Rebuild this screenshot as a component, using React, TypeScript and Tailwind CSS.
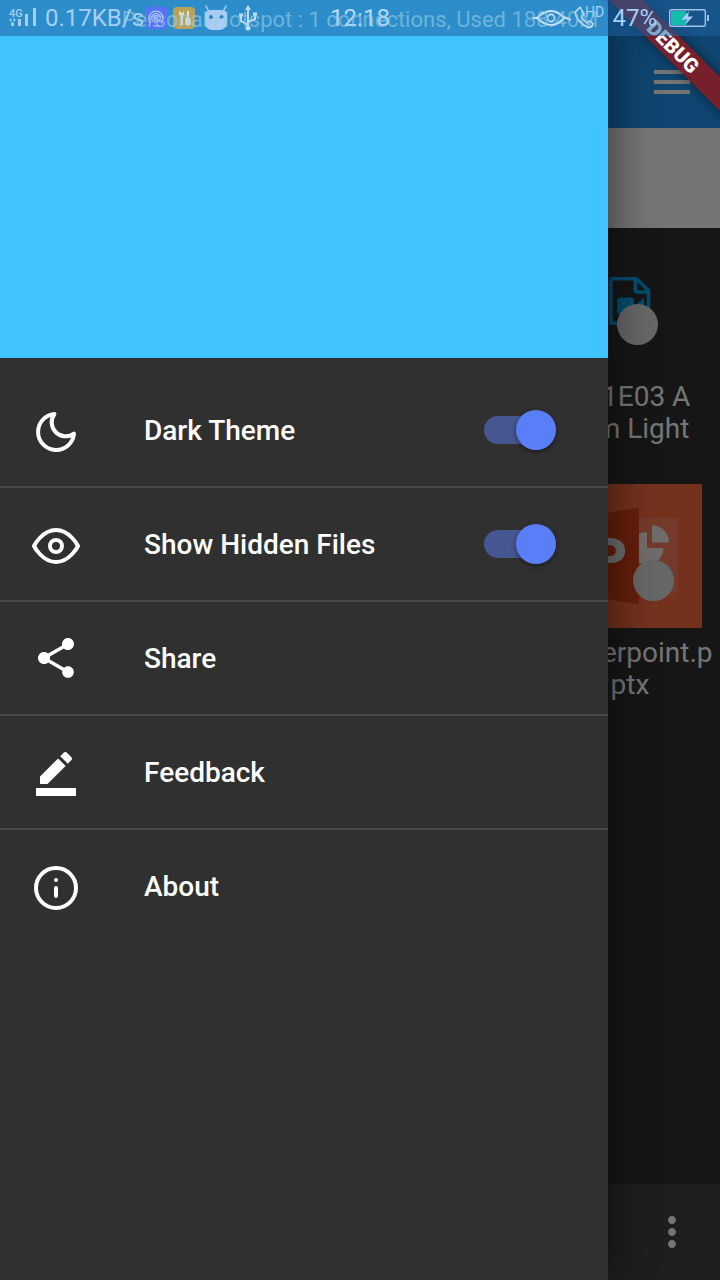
import { useState } from "react";
import type { ReactNode } from "react";

function LineIcon({ children }: { children: ReactNode }) {
  return (
    <svg
      className="mt-1 size-12"
      viewBox="0 0 24 24"
      fill="none"
      stroke="currentColor"
      strokeWidth="2"
      strokeLinecap="round"
      strokeLinejoin="round"
      aria-hidden="true"
    >
      {children}
    </svg>
  );
}

function SolidIcon({ d }: { d: string }) {
  return (
    <svg className="size-12" viewBox="0 0 24 24" fill="currentColor" aria-hidden="true">
      <path d={d} />
    </svg>
  );
}

const MoonIcon = () => (
  <LineIcon>
    <path d="M21 12.79A9 9 0 1 1 11.21 3 7 7 0 0 0 21 12.79z" />
  </LineIcon>
);

const EyeIcon = () => (
  <LineIcon>
    <path d="M1 12s4-8 11-8 11 8 11 8-4 8-11 8-11-8-11-8z" />
    <circle cx="12" cy="12" r="3" />
  </LineIcon>
);

const InfoIcon = () => (
  <LineIcon>
    <circle cx="12" cy="12" r="10" />
    <path d="M12 16v-4M12 8h.01" />
  </LineIcon>
);

const ShareIcon = () => (
  <SolidIcon d="M18 16.08c-.76 0-1.44.3-1.96.77L8.91 12.7c.05-.23.09-.46.09-.7s-.04-.47-.09-.7l7.05-4.11c.54.5 1.25.81 2.04.81 1.66 0 3-1.34 3-3s-1.34-3-3-3-3 1.34-3 3c0 .24.04.47.09.7L8.04 9.81C7.5 9.31 6.79 9 6 9c-1.66 0-3 1.34-3 3s1.34 3 3 3c.79 0 1.5-.31 2.04-.81l7.12 4.16c-.05.21-.08.43-.08.65 0 1.61 1.31 2.92 2.92 2.92s2.92-1.31 2.92-2.92-1.31-2.92-2.92-2.92z" />
);

const PencilIcon = () => (
  <SolidIcon d="M22 24H2v-4h20v4zM13.06 5.19l3.75 3.75L7.75 18H4v-3.75l9.06-9.06zm4.82 2.68l-3.75-3.75 1.83-1.83c.39-.39 1.02-.39 1.41 0l2.34 2.34c.39.39.39 1.02 0 1.41l-1.83 1.83z" />
);

function SwitchRow({ id, icon, label }: { id: string; icon: ReactNode; label: string }) {
  const [on, setOn] = useState(true);
  return (
    <li>
      <div className="flex h-28 items-center pr-13 pl-8">
        {icon}
        <label htmlFor={id} className="ml-16 flex-1 pt-0.5">
          {label}
        </label>
        <input
          id={id}
          type="checkbox"
          role="switch"
          checked={on}
          onChange={(e) => setOn(e.target.checked)}
          className="relative h-10 w-18 appearance-none before:absolute before:inset-x-0 before:top-1.5 before:h-7 before:rounded-full before:bg-[#6b6b6b] after:absolute after:top-0 after:left-0 after:size-10 after:rounded-full after:bg-[#bdbdbd] after:shadow-[0_2px_5px_rgba(0,0,0,0.45)] checked:before:bg-[#465691] checked:after:left-8 checked:after:bg-[#5a7ef8]"
        />
      </div>
    </li>
  );
}

function ActionRow({ icon, label }: { icon: ReactNode; label: string }) {
  return (
    <li>
      <button type="button" className="flex h-28 w-full items-center pr-13 pl-8 text-left">
        {icon}
        <span className="ml-16 pt-0.5">{label}</span>
      </button>
    </li>
  );
}

function Drawer() {
  return (
    <aside className="absolute inset-y-0 left-0 w-[calc(100%-112px)] bg-[#303030] text-white shadow-[6px_0_40px_rgba(0,0,0,0.45)]">
      <div className="h-[358px] bg-[#40c4ff]" />
      <ul className="divide-y-2 divide-[#4a4a4a] pt-4 text-[28px] leading-8 font-medium">
        <SwitchRow id="dark-theme" icon={<MoonIcon />} label="Dark Theme" />
        <SwitchRow id="hidden-files" icon={<EyeIcon />} label="Show Hidden Files" />
        <ActionRow icon={<ShareIcon />} label="Share" />
        <ActionRow icon={<PencilIcon />} label="Feedback" />
        <ActionRow icon={<InfoIcon />} label="About" />
      </ul>
    </aside>
  );
}

function VideoFile() {
  return (
    <svg className="h-[50px] w-[42px]" viewBox="0 -2 42 50" aria-hidden="true">
      <path
        d="M3.7 1.8H27.5L39.5 13.5V44.5Q39.5 46.2 37.8 46.2H3.7Q1.9 46.2 1.9 44.5V3.5Q1.9 1.8 3.7 1.8ZM26.3 2V13Q26.3 15 28.3 15H39"
        fill="none"
        stroke="#03a9f4"
        strokeWidth="3.6"
        strokeLinejoin="round"
      />
      <rect x="8" y="20.5" width="17" height="17" rx="3.5" fill="#03a9f4" />
      <path d="M26 29L35 20.5V37.5Z" fill="#03a9f4" />
    </svg>
  );
}

function SlidesFile() {
  return (
    <svg className="size-36" viewBox="0 0 144 144" aria-hidden="true">
      <path d="M0 0H144V144H0z" fill="#fd6c42" />
      <path d="M81 34H120V109H81z" fill="#fc7e5e" />
      <path d="M18 34L81 23.5V120.5L18 110z" fill="#dc4318" />
      <text x="34" y="92" fill="#f0f0f0" fontSize="54" fontWeight="900" fontFamily="Roboto, sans-serif">
        P
      </text>
      <path d="M94 41.5A17 17 0 0 1 111 58.5H94z" fill="#f5ebe8" />
      <path d="M89 48V64H105.5A16.5 16.5 0 0 1 81 78.5V50Q85 48 89 48z" fill="#f5ebe8" />
    </svg>
  );
}

function FileTile({ art, mark, lines }: { art: ReactNode; mark: ReactNode; lines: [string, string] }) {
  return (
    <li className="col-start-4 flex h-64 flex-col items-center gap-[9px]">
      <div className="relative flex size-36 items-center justify-center">
        {art}
        {mark}
      </div>
      <p className="text-center text-[28px] leading-8 whitespace-nowrap text-white">
        {lines[0]}
        <br />
        {lines[1]}
      </p>
    </li>
  );
}

function StatusBar() {
  return (
    <div className="absolute inset-x-0 top-0 h-9 bg-[#1d60a1]/55 text-[#a9cdf5]">
      <div className="grid h-full grid-cols-[1fr_auto_1fr] items-center text-2xl">
        <div className="flex items-center pl-2">
          <svg className="h-5 w-7" viewBox="0 0 28 20" fill="currentColor" aria-hidden="true">
            <text x="1" y="8.5" fontSize="11" fontFamily="Roboto, sans-serif" fontWeight="500">
              4G
            </text>
            <path d="M3 14.5h3V18H3zM10 11h3v7h-3zM17 6h3v12h-3zM25 0h3v18h-3zM1 12l2.5-2v4zM8 12l-2.5-2v4z" />
          </svg>
          <span className="ml-[9px] w-25 whitespace-nowrap">0.17KB/s</span>
          <svg className="size-[22px]" viewBox="0 0 22 22" fill="none" aria-hidden="true">
            <rect width="22" height="22" rx="4" fill="#5673f5" />
            <g stroke="#a9c4ff" strokeWidth="1.3">
              <path d="M6 16A7 7 0 1 1 16 16M8 18.500A8 8 0 0 0 14 18.500" />
              <circle cx="11" cy="11" r="4.3" />
              <path d="M13 9.5A2.3 2.3 0 1 0 13 12.5M9 11h3" />
            </g>
          </svg>
          <svg className="ml-1.5 size-[22px]" viewBox="0 0 22 22" aria-hidden="true">
            <rect width="22" height="22" rx="4" fill="#bba25a" />
            <path
              d="M6 4v3.500l1.500 1.500V18h2.500V9l1-1.500V4L9.500 6h-1zM14 4h2v6l1.500 1.500V18h-5v-6.500L14 10z"
              fill="#dbe1d8"
            />
          </svg>
          <svg className="ml-2 h-[26px] w-[27px]" viewBox="0 0 27 26" aria-hidden="true">
            <path d="M3 1l3 6M23 1l-3 6" stroke="#a9cdf5" strokeWidth="1.5" strokeLinecap="round" />
            <path d="M2 10Q3 5 8 5H18Q24 5 24 11V18Q23 25 16 25H9Q2 24 2 17z" fill="#a9cdf5" />
            <circle cx="8" cy="12" r="2" fill="#2f80bd" />
            <circle cx="18.5" cy="12" r="2" fill="#2f80bd" />
          </svg>
          <svg className="ml-2 h-[26px] w-5" viewBox="0 0 20 26" fill="none" stroke="#c0dcfa" strokeWidth="2" aria-hidden="true">
            <path d="M10 3V23M10 20L3 16V10M10 17L17 14V9" />
            <path d="M10 0l3 5H7z" fill="#c0dcfa" stroke="none" />
            <circle cx="10" cy="23" r="2.5" fill="#c0dcfa" stroke="none" />
            <path d="M1 8.5h4v3H1zM15 7.5h4v3h-4z" fill="#c0dcfa" stroke="none" />
          </svg>
        </div>
        <time className="text-[#b5d8fb]">12:18</time>
        <div className="flex items-center justify-end pr-[11px]">
          <svg className="h-5 w-10" viewBox="0 0 40 20" fill="none" stroke="#c5e0fc" strokeWidth="2" aria-hidden="true">
            <path d="M1 10H5Q12 3 19 3Q26 3 32 10Q26 17 19 17Q12 17 5 10M32 9L39 12" />
            <circle cx="19" cy="10" r="3.6" strokeWidth="1.6" />
          </svg>
          <svg className="ml-0.5 h-[26px] w-[30px]" viewBox="0 0 30 26" fill="none" aria-hidden="true">
            <path
              d="M6 2L1 7.5Q3 17 14 22.500Q18 23 19 18.500L15.500 16L13 18Q9 15 7.500 12L10 9L6 2"
              stroke="#c5e0fc"
              strokeWidth="1.5"
            />
            <text x="11" y="12" fontSize="14" fontFamily="Roboto, sans-serif" fill="#a9cdf5">
              HD
            </text>
          </svg>
          <span className="ml-2">47%</span>
          <svg className="ml-3 h-[18px] w-10" viewBox="0 0 40 18" aria-hidden="true">
            <rect x="0.7" y="0.7" width="35.6" height="16.6" rx="1.5" fill="none" stroke="#9fc3ea" strokeWidth="1.4" />
            <rect x="2" y="2" width="15" height="14" fill="#12bcab" />
            <rect x="38" y="6" width="2" height="6" fill="#9fc3ea" />
            <path d="M20 2L12.5 10.5H18L16 16L24 7.500H19z" fill="#a9cdf5" />
          </svg>
        </div>
      </div>
      <p className="absolute inset-x-0 top-1 text-center text-[22px] leading-8 whitespace-nowrap text-[#9dcee1]/60">
        Personal Hotspot : 1 connections, Used 188.40M
      </p>
    </div>
  );
}

export default function App() {
  return (
    <div className="relative flex min-h-screen flex-col overflow-hidden bg-[#303030] font-[Roboto,sans-serif]">
      <header className="flex h-32 items-center justify-end bg-[#2196f3] pt-9 pr-6 text-white">
        <button type="button" aria-label="Menu">
          <SolidIcon d="M3 18h18v-2H3v2zm0-5h18v-2H3v2zm0-7v2h18V6H3z" />
        </button>
      </header>
      <div className="h-25 bg-white" />
      <main className="flex-1">
        <ul className="grid grid-cols-4">
          <FileTile
            art={<VideoFile />}
            mark={<span className="absolute top-19 left-[59px] size-[41px] rounded-full bg-[#e0e0e0]" />}
            lines={["S01E03 A", "rom Light"]}
          />
          <FileTile
            art={<SlidesFile />}
            mark={<span className="absolute top-19 left-[75px] size-[41px] rounded-full bg-[#e0e0e0]" />}
            lines={["Powerpoint.p", "ptx"]}
          />
        </ul>
      </main>
      <footer className="flex h-24 items-center justify-end bg-[#424242] pr-6 text-white">
        <button type="button" aria-label="More options">
          <SolidIcon d="M12 8c1.1 0 2-.9 2-2s-.9-2-2-2-2 .9-2 2 .9 2 2 2zm0 2c-1.1 0-2 .9-2 2s.9 2 2 2 2-.9 2-2-.9-2-2-2zm0 6c-1.1 0-2 .9-2 2s.9 2 2 2 2-.9 2-2-.9-2-2-2z" />
        </button>
      </footer>

      <div className="absolute inset-0 bg-black/54" />
      <Drawer />

      <div className="absolute top-0 right-0 size-32 overflow-hidden">
        <div className="absolute top-[35px] left-[-19px] flex h-6 w-[200px] rotate-45 items-center justify-center bg-[#7b1f28]/95 text-xl leading-6 font-black text-white shadow-[0_0_12px_rgba(0,0,0,0.5)]">
          DEBUG
        </div>
      </div>
      <StatusBar />
    </div>
  );
}
